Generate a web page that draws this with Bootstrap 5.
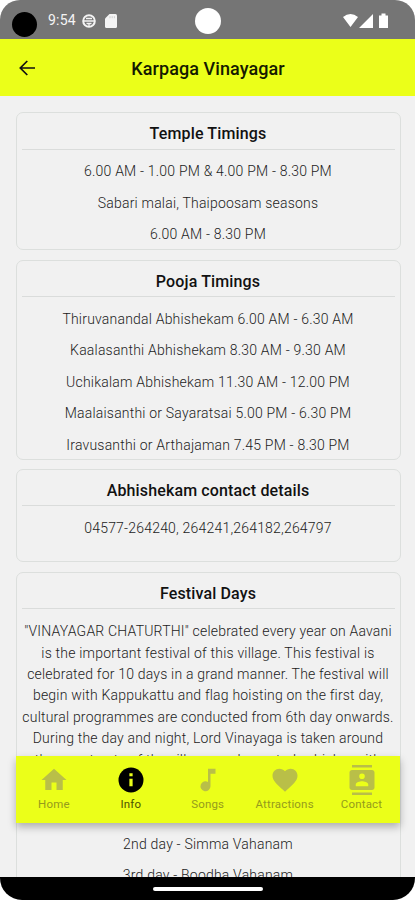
<!DOCTYPE html>
<html lang="en">
<head>
<meta charset="utf-8">
<meta name="viewport" content="width=device-width, initial-scale=1">
<title>Karpaga Vinayagar</title>
<link href="https://cdn.jsdelivr.net/npm/bootstrap@5.3.0/dist/css/bootstrap.min.css" rel="stylesheet">
<style>
body{font-family:Roboto,"Liberation Sans",sans-serif;background:#fff;color:#484848}
.phone{width:415px;height:900px;border-radius:20px 20px 22px 22px;background:#f1f1f1}
.status{height:39px;background:#757575;color:#f4f4f4;font-size:14px;letter-spacing:.2px;padding:2px 26px 0 12px}
.cam{width:25px;height:25px;border-radius:50%;background:#000;margin-top:8px}
.lens{width:26px;height:26px;border-radius:50%;background:#fff;left:195px;top:8px}
.appbar{height:57px;background:#ebff19;color:#151a00}
.appbar h1{font-size:18px;font-weight:500;letter-spacing:.08px;padding:2px 0 0 1px}
.back{left:18px;top:20px}
.feed{padding:16px 14.5px 0 15.5px;height:781px}
.panel{border:1.5px solid #dcdfdd;border-radius:7px;background:transparent;padding:0 5px;margin-bottom:9.5px;text-align:center;flex:none}
.panel h2{font-size:16px;font-weight:500;letter-spacing:.14px;line-height:20px;color:#111;margin:0;padding:11px 0 5px;height:36.5px;border-bottom:1.5px solid #dadcdb}
.panel p{font-size:14px;line-height:21.4px;margin:0 -6px;padding:5px 0;font-weight:300;letter-spacing:.2px;white-space:nowrap;color:#1c1c1c}
.lines{padding-top:6.900px}
.dock{left:15.5px;top:756px;width:384.5px;height:67px;background:#ebff19;box-shadow:0 4px 8px rgba(0,0,0,.28);color:#959b1c}
.dock a{width:20%;font-size:11.5px;letter-spacing:.18px;line-height:14px;color:inherit;padding-top:9px}
.dock svg{fill:#b9bf48;margin-bottom:2px}
.dock a.active{color:#4c5200}.dock a.active svg{fill:#000}
.gesture{height:23px;background:#000}
.gesture div{width:110px;height:4px;border-radius:2px;background:#fff}
</style>
</head>
<body>
<div class="phone position-relative overflow-hidden">
  <div class="status d-flex align-items-center position-relative">
    <div class="cam"></div>
    <span style="margin-left:11px">9:54</span>
    <svg style="margin-left:6px" width="14" height="14" viewBox="0 0 14 14" fill="none" stroke="#f4f4f4"><circle cx="7" cy="7" r="5.800" stroke-width="2"/><path d="M1 7h12M4 4.500h6M4.500 9.500h5M7 9v4" stroke-width="1.300"/></svg>
    <svg style="margin-left:9px" width="12" height="14" viewBox="0 0 12 14"><path fill="#f4f4f4" d="M4.500 0H10.500q1.500 0 1.500 1.500v11q0 1.500-1.500 1.500h-9Q0 14 0 12.500V4.500z"/><path d="M5 2.200v2M7.200 2.200v2M9.400 2.200v2" stroke="#c5c5c5" stroke-width=".8"/></svg>
    <div class="lens position-absolute"></div>
    <svg class="ms-auto" width="48" height="16" viewBox="0 0 48 16" fill="#fff"><path d="M2 4Q9.500-2 17 4L9.500 14zM18 15 32 1v14zM38 2.500h2.500V.5h4v2H47V15h-9z"/></svg>
  </div>
  <header class="appbar d-flex align-items-center justify-content-center position-relative">
    <svg class="back position-absolute" width="18" height="18" viewBox="0 0 18 18" fill="none" stroke="#111" stroke-width="1.700"><path d="M17 9H3M9.300 2 2.300 9l7 7"/></svg>
    <h1 class="m-0">Karpaga Vinayagar</h1>
  </header>
  <main class="feed d-flex flex-column overflow-hidden">
    <section class="panel" style="height:138px"><h2>Temple Timings</h2><div class="lines">
      <p>6.00 AM - 1.00 PM &amp; 4.00 PM - 8.30 PM</p><p>Sabari malai, Thaipoosam seasons</p><p>6.00 AM - 8.30 PM</p></div></section>
    <section class="panel" style="height:200.5px"><h2>Pooja Timings</h2><div class="lines">
      <p>Thiruvanandal Abhishekam 6.00 AM - 6.30 AM</p><p>Kaalasanthi Abhishekam 8.30 AM - 9.30 AM</p><p>Uchikalam Abhishekam 11.30 AM - 12.00 PM</p><p>Maalaisanthi or Sayaratsai 5.00 PM - 6.30 PM</p><p>Iravusanthi or Arthajaman 7.45 PM - 8.30 PM</p></div></section>
    <section class="panel" style="height:93.5px;margin-top:-.8px"><h2>Abhishekam contact details</h2><div class="lines"><p>04577-264240, 264241,264182,264797</p></div></section>
    <section class="panel" style="height:420px"><h2>Festival Days</h2><div class="lines">
      <p>"VINAYAGAR CHATURTHI" celebrated every year on Aavani<br>is the important festival of this village. This festival is<br>celebrated for 10 days in a grand manner. The festival will<br>begin with Kappukattu and flag hoisting on the first day,<br>cultural programmes are conducted from 6th day onwards.<br>During the day and night, Lord Vinayaga is taken around<br>the car streets of the village on decorated vehicles with<br>music and prayers.</p>
      <p>1st day - Mooshika Vahanam</p><p>2nd day - Simma Vahanam</p><p>3rd day - Boodha Vahanam</p></div></section>
  </main>
  <nav class="dock position-absolute d-flex">
    <a class="d-flex flex-column align-items-center text-decoration-none" href="#"><svg width="30" height="30" viewBox="0 0 24 24"><path d="M10 20v-6h4v6h5v-8h3L12 3 2 12h3v8z"/></svg>Home</a>
    <a class="active d-flex flex-column align-items-center text-decoration-none" href="#"><svg width="30" height="30" viewBox="0 0 24 24"><path d="M12 2a10 10 0 1 0 0 20 10 10 0 0 0 0-20z"/><path fill="#ebff19" d="M10.700 11h2.600v6h-2.600zM10.700 6.500h2.600V9h-2.600z"/></svg>Info</a>
    <a class="d-flex flex-column align-items-center text-decoration-none" href="#"><svg width="30" height="30" viewBox="0 0 24 24"><path d="M12 3v10.550A4 4 0 1 0 14 17V7h4V3z"/></svg>Songs</a>
    <a class="d-flex flex-column align-items-center text-decoration-none" href="#"><svg width="30" height="30" viewBox="0 0 24 24"><path d="m12 21.350-1.450-1.320C5.400 15.360 2 12.280 2 8.500 2 5.420 4.420 3 7.500 3c1.740 0 3.410.81 4.500 2.090C13.090 3.810 14.760 3 16.500 3 19.580 3 22 5.420 22 8.500c0 3.780-3.400 6.860-8.550 11.540z"/></svg>Attractions</a>
    <a class="d-flex flex-column align-items-center text-decoration-none" href="#"><svg width="30" height="30" viewBox="0 0 24 24"><path d="M20 0H4v2h16zM4 24h16v-2H4zM20 4H4c-1.100 0-2 .9-2 2v12c0 1.100.9 2 2 2h16c1.100 0 2-.9 2-2V6c0-1.100-.9-2-2-2zm-8 2.750a2.250 2.250 0 1 1 0 4.500 2.250 2.250 0 0 1 0-4.500zM17 17H7v-1.500c0-1.670 3.330-2.500 5-2.500s5 .83 5 2.500z"/></svg>Contact</a>
  </nav>
  <div class="gesture d-flex align-items-center justify-content-center position-relative"><div></div></div>
</div>
<script src="https://cdn.jsdelivr.net/npm/bootstrap@5.3.0/dist/js/bootstrap.bundle.min.js"></script>
</body>
</html>
